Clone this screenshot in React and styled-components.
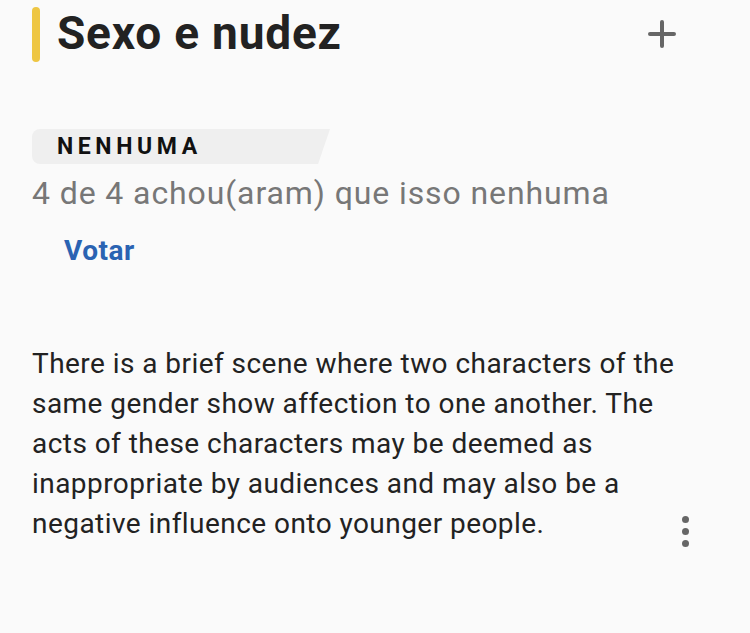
import React from "react";
import styled, { createGlobalStyle } from "styled-components";

const GlobalStyle = createGlobalStyle`
  body {
    margin: 0;
    background: #fafafa;
    font-family: Roboto, "Liberation Sans", sans-serif;
  }
`;

export default function App() {
  return (
    <Page>
      <GlobalStyle />
      <Header>
        <Accent />
        <Title>Sexo e nudez</Title>
        <AddButton aria-label="Adicionar">
          <svg width="28" height="28" viewBox="0 0 28 28">
            <path d="M14 2v24M2 14h24" stroke="#666" strokeWidth="4" strokeLinecap="round" />
          </svg>
        </AddButton>
      </Header>

      <Rating>
        <Badge>NENHUMA</Badge>
        <Votes>4 de 4 achou(aram) que isso nenhuma</Votes>
        <VoteLink>Votar</VoteLink>
      </Rating>

      <Entry>
        <Description>
          There is a brief scene where two characters of the same gender show
          affection to one another. The acts of these characters may be deemed
          as inappropriate by audiences and may also be a negative influence
          onto younger people.
        </Description>
        <MoreButton aria-label="Mais">
          <Dot />
          <Dot />
          <Dot />
        </MoreButton>
      </Entry>
    </Page>
  );
}

const Page = styled.div`
  width: 750px;
  height: 633px;
  box-sizing: border-box;
  padding: 7px 0 0 32px;
  background: #fafafa;
`;

const Header = styled.div`
  display: flex;
  align-items: center;
  height: 55px;
  padding-right: 74px;
`;

const Accent = styled.div`
  width: 8px;
  height: 55px;
  border-radius: 4px;
  background: #eec643;
  margin-right: 17px;
`;

const Title = styled.h1`
  flex: 1;
  margin: -4px 0 0;
  font-size: 46px;
  font-weight: 700;
  letter-spacing: 0.8px;
  color: #222;
  line-height: 1;
`;

const AddButton = styled.div`
  display: flex;
  margin-top: -2px;
`;

const Rating = styled.div`
  display: flex;
  flex-direction: column;
  align-items: flex-start;
  margin-top: 67px;
`;

const Badge = styled.div`
  height: 35px;
  width: 298px;
  box-sizing: border-box;
  padding-left: 25px;
  display: flex;
  align-items: center;
  background: #efefef;
  border-radius: 8px 0 0 8px;
  clip-path: polygon(0 0, 100% 0, 96% 100%, 0 100%);
  font-size: 23px;
  font-weight: 700;
  letter-spacing: 4.6px;
  color: #111;
`;

const Votes = styled.div`
  margin-top: 9px;
  font-size: 32px;
  color: #777;
  letter-spacing: 0.9px;
  line-height: 40px;
`;

const VoteLink = styled.div`
  margin: 20px 0 0 32px;
  font-size: 28px;
  font-weight: 700;
  letter-spacing: 0.5px;
  color: #2a63b2;
  line-height: 36px;
`;

const Entry = styled.div`
  display: flex;
  align-items: flex-end;
  margin-top: 75px;
`;

const Description = styled.p`
  margin: 0;
  width: 680px;
  flex-shrink: 0;
  font-size: 28px;
  line-height: 40px;
  color: #222;
  letter-spacing: 0.45px;
`;

const MoreButton = styled.div`
  display: flex;
  flex-direction: column;
  gap: 5px;
  margin: 0 0 -3px -30px;
`;

const Dot = styled.span`
  width: 7px;
  height: 7px;
  border-radius: 50%;
  background: #666;
`;
